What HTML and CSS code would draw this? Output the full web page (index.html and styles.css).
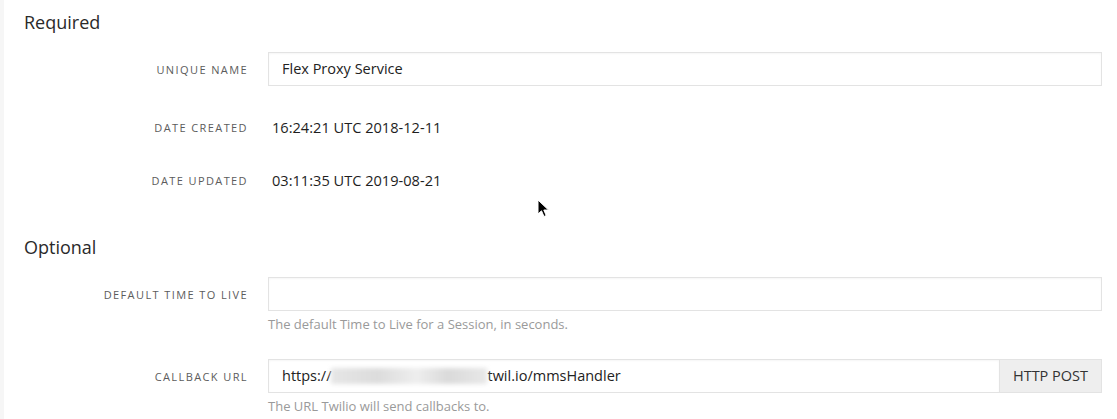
FILE: index.html
```html
<!DOCTYPE html>
<html>
<head>
<meta charset="utf-8">
<link rel="stylesheet" href="styles.css">
</head>
<body>
<div class="page">
  <section class="section">
    <h2 class="heading">Required</h2>
    <div class="row row-input">
      <div class="label">UNIQUE NAME</div>
      <div class="field"><div class="input">Flex Proxy Service</div></div>
    </div>
    <div class="row row-static gap-a">
      <div class="label">DATE CREATED</div>
      <div class="field"><div class="static">16:24:21 UTC 2018-12-11</div></div>
    </div>
    <div class="row row-static">
      <div class="label">DATE UPDATED</div>
      <div class="field"><div class="static">03:11:35 UTC 2019-08-21</div></div>
    </div>
  </section>
  <section class="section optional">
    <h2 class="heading">Optional</h2>
    <div class="row row-input">
      <div class="label">DEFAULT TIME TO LIVE</div>
      <div class="field"><div class="input"></div></div>
    </div>
    <div class="help-row"><div class="help">The default Time to Live for a Session, in seconds.</div></div>
    <div class="row row-input gap-b">
      <div class="label">CALLBACK URL</div>
      <div class="field">
        <div class="input-group">
          <div class="input grouped">https://<span class="blur"></span>twil.io/mmsHandler</div>
          <div class="addon">HTTP POST</div>
        </div>
      </div>
    </div>
    <div class="help-row"><div class="help">The URL Twilio will send callbacks to.</div></div>
  </section>
  <svg class="cursor" width="14" height="20" viewBox="0 0 14 20"><path d="M1 1 L1 15 L4.5 11.8 L7 17.5 L9.2 16.5 L6.8 11 L11.5 11 Z" fill="#000" stroke="#fff" stroke-width="1"/></svg>
</div>
</body>
</html>
```

FILE: styles.css
```css
html, body {
  margin: 0;
  padding: 0;
  background: #fff;
}
body {
  font-family: "Open Sans", Lato, sans-serif;
  color: #222;
}
.page {
  position: relative;
  border-left: 4px solid #f6f6f6;
  padding: 10px 15px 0 20px;
  height: 419px;
  box-sizing: border-box;
  overflow: hidden;
}
.heading {
  margin: 0 0 18px 0;
  font-size: 18px;
  font-weight: 400;
  line-height: 24px;
  color: #2a2a2a;
}
.section.optional {
  margin-top: 38px;
}
.row {
  display: grid;
  grid-template-columns: 223px 1fr;
  column-gap: 21px;
  align-items: center;
}
.row-input {
  height: 34px;
}
.row-static {
  height: 34px;
}
.gap-a {
  margin-top: 24px;
  margin-bottom: 19px;
}
.gap-b {
  margin-top: 27px;
}
.label {
  text-align: right;
  font-size: 11px;
  letter-spacing: 1.4px;
  color: #5c5c5c;
  margin-right: -1px;
}
.field {
  min-width: 0;
}
.static {
  font-size: 14.6px;
  color: #1e1e1e;
  padding-left: 4px;
}
.input {
  height: 34px;
  box-sizing: border-box;
  border: 1px solid #e3e3e3;
  box-shadow: inset 0 1px 2px rgba(0,0,0,0.04);
  background: #fff;
  padding: 0 13px;
  font-size: 14.5px;
  line-height: 32px;
  color: #222;
  white-space: nowrap;
}
.input-group {
  display: flex;
}
.input.grouped {
  flex: 1;
  border-right: none;
}
.blur {
  display: inline-block;
  width: 156px;
  height: 16px;
  vertical-align: -3px;
  background: linear-gradient(90deg, #e6e6e6 0%, #dcdcdc 30%, #eeeeee 55%, #dadada 75%, #e8e8e8 100%);
  filter: blur(2px);
}
.addon {
  width: 103px;
  height: 34px;
  box-sizing: border-box;
  border: 1px solid #e3e3e3;
  background: #eeeeee;
  font-size: 14.5px;
  line-height: 32px;
  text-align: center;
  color: #333;
}
.help-row {
  padding-left: 244px;
  margin-top: 5px;
}
.help {
  font-size: 13px;
  line-height: 16px;
  color: #9a9a9a;
}
.cursor {
  position: absolute;
  left: 533px;
  top: 199px;
}
```
